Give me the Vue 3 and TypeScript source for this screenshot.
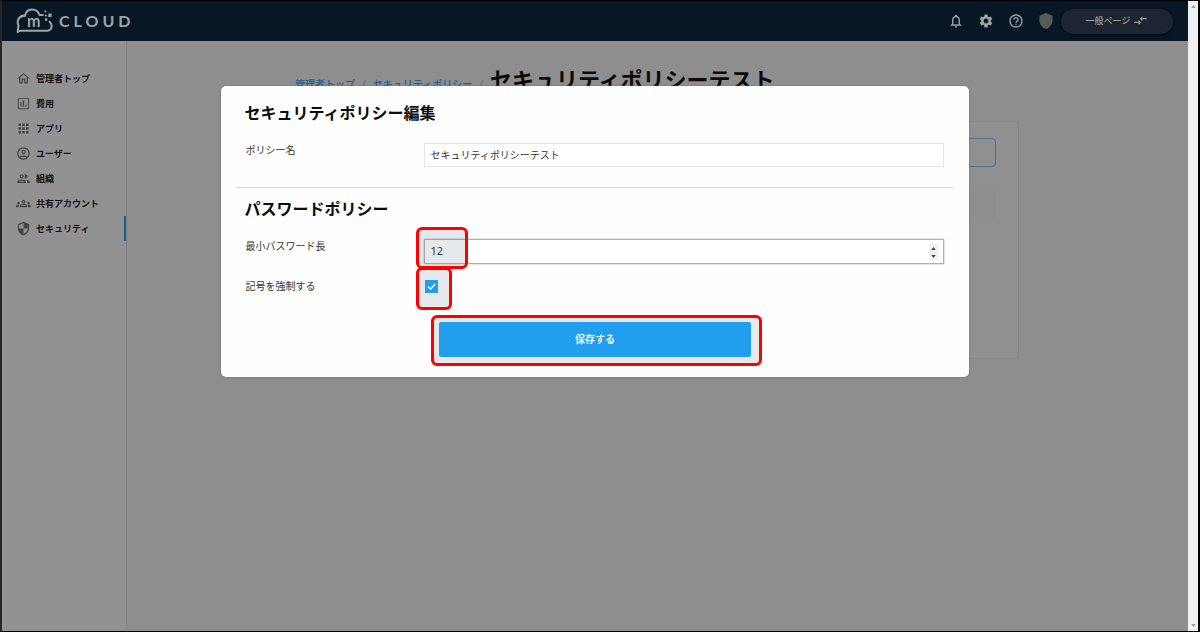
<script setup lang="ts">
import { ref } from 'vue'

interface NavItem {
  label: string
  paths: string[]
  active?: boolean
}

const navItems: NavItem[] = [
  {
    label: '管理者トップ',
    paths: ['M12 5.69l5 4.5V18h-2v-6H9v6H7v-7.81l5-4.5M12 3L2 12h3v8h6v-6h2v6h6v-8h3L12 3z'],
  },
  {
    label: '費用',
    paths: [
      'M19 3H5c-1.1 0-2 .9-2 2v14c0 1.1.9 2 2 2h14c1.1 0 2-.9 2-2V5c0-1.1-.9-2-2-2zm0 16.5H4.5v-15h15v15zM7 10h2v7H7zm4-3h2v10h-2zm4 7h2v3h-2z',
    ],
  },
  {
    label: 'アプリ',
    paths: [
      'M4 8h4V4H4v4zm6 12h4v-4h-4v4zm-6 0h4v-4H4v4zm0-6h4v-4H4v4zm6 0h4v-4h-4v4zm6-10v4h4V4h-4zm-6 4h4V4h-4v4zm6 6h4v-4h-4v4zm0 6h4v-4h-4v4z',
    ],
  },
  {
    label: 'ユーザー',
    paths: [
      'M12 2C6.48 2 2 6.48 2 12s4.48 10 10 10 10-4.48 10-10S17.52 2 12 2zM7.35 18.5C8.66 17.56 10.26 17 12 17s3.34.56 4.65 1.5c-1.31.94-2.91 1.5-4.65 1.5s-3.34-.56-4.65-1.5zm10.79-1.38C16.45 15.8 14.32 15 12 15s-4.45.8-6.14 2.12C4.7 15.73 4 13.95 4 12c0-4.42 3.58-8 8-8s8 3.58 8 8c0 1.95-.7 3.73-1.86 5.12z',
      'M12 6c-1.93 0-3.5 1.57-3.5 3.5S10.07 13 12 13s3.5-1.57 3.5-3.5S13.93 6 12 6zm0 5c-.83 0-1.5-.67-1.5-1.5S11.17 8 12 8s1.5.67 1.5 1.5S12.83 11 12 11z',
    ],
  },
  {
    label: '組織',
    paths: [
      'M9 13.75c-2.34 0-7 1.17-7 3.5V19h14v-1.75c0-2.33-4.66-3.5-7-3.5zM4.34 17c.84-.58 2.87-1.25 4.66-1.25s3.82.67 4.66 1.25H4.34zM9 12c1.93 0 3.5-1.57 3.5-3.5S10.93 5 9 5 5.5 6.57 5.5 8.5 7.07 12 9 12zm0-5c.83 0 1.5.67 1.5 1.5S9.83 10 9 10s-1.5-.67-1.5-1.5S8.17 7 9 7zm7.04 6.81c1.16.84 1.96 1.96 1.96 3.44V19h4v-1.75c0-2.02-3.5-3.17-5.96-3.44zM15 12c1.93 0 3.5-1.57 3.5-3.5S16.93 5 15 5c-.54 0-1.04.13-1.5.35.63.89 1 1.98 1 3.15s-.37 2.26-1 3.15c.46.22.96.35 1.5.35z',
    ],
  },
  {
    label: '共有アカウント',
    paths: [
      'M4 13c1.1 0 2-.9 2-2s-.9-2-2-2-2 .9-2 2 .9 2 2 2zm1.13 1.1c-.37-.06-.74-.1-1.13-.1-.99 0-1.93.21-2.78.58C.48 14.9 0 15.62 0 16.43V18h4.5v-1.61c0-.83.23-1.61.63-2.29zM20 13c1.1 0 2-.9 2-2s-.9-2-2-2-2 .9-2 2 .9 2 2 2zm4 3.43c0-.81-.48-1.53-1.22-1.85-.85-.37-1.79-.58-2.78-.58-.39 0-.76.04-1.13.1.4.68.63 1.46.63 2.29V18H24v-1.57zM16.24 13.65c-1.17-.52-2.61-.9-4.24-.9-1.63 0-3.07.39-4.24.9C6.68 14.13 6 15.21 6 16.39V18h12v-1.61c0-1.18-.68-2.26-1.76-2.74zM8.07 16c.09-.23.13-.39.91-.69.97-.38 1.99-.56 3.02-.56s2.05.18 3.02.56c.77.3.81.46.91.69H8.07zM12 8c.55 0 1 .45 1 1s-.45 1-1 1-1-.45-1-1 .45-1 1-1m0-2c-1.66 0-3 1.34-3 3s1.34 3 3 3 3-1.34 3-3-1.34-3-3-3z',
    ],
  },
  {
    label: 'セキュリティ',
    active: true,
    paths: [
      'M12 1L3 5v6c0 5.55 3.84 10.74 9 12 5.16-1.26 9-6.45 9-12V5l-9-4zm0 10.99h7c-.53 4.12-3.28 7.79-7 8.94V12H5V6.3l7-3.11v8.8z',
    ],
  },
]

const policyName = ref('セキュリティポリシーテスト')
const minLength = ref(12)
const forceSymbols = ref(true)

function step(delta: number) {
  minLength.value = Math.max(1, minLength.value + delta)
}
</script>

<template>
  <div class="window">
    <div class="page">
      <header class="topbar">
        <a class="brand" href="#" aria-label="m CLOUD">
          <svg class="brand-mark" viewBox="0 0 110 76" aria-hidden="true">
            <g fill="none" stroke="currentColor" stroke-width="6" stroke-linecap="round" stroke-linejoin="round">
              <path d="M80 20H70C62-2 31-1 27 22C11 21 1 36 7 50C8 57 5 63 5 71C8 68 10 67 15 67H94C107 65 110 49 100 40" />
              <path d="M27 22C23 22 19 23 16 25" />
            </g>
            <g fill="currentColor">
              <circle cx="87" cy="10" r="3" />
              <rect x="96" y="16" width="10" height="10" rx="1" />
              <circle cx="89" cy="22" r="3" />
              <rect x="86" y="30" width="7" height="7" rx="1" />
            </g>
            <text x="53" y="57" text-anchor="middle" class="brand-m">m</text>
          </svg>
          <span class="brand-name">CLOUD</span>
        </a>
        <div class="tools">
          <button class="tool" type="button" aria-label="通知">
            <svg viewBox="0 0 24 24"><path d="M12 22c1.1 0 2-.9 2-2h-4c0 1.1.9 2 2 2zm6-6v-5c0-3.07-1.63-5.64-4.5-6.32V4c0-.83-.67-1.5-1.5-1.5s-1.5.67-1.5 1.5v.68C7.64 5.36 6 7.92 6 11v5l-2 2v1h16v-1l-2-2zm-2 1H8v-6c0-2.48 1.51-4.5 4-4.5s4 2.02 4 4.5v6z" /></svg>
          </button>
          <button class="tool" type="button" aria-label="設定">
            <svg viewBox="0 0 24 24"><path d="M19.14 12.94c.04-.3.06-.61.06-.94 0-.32-.02-.64-.07-.94l2.03-1.58c.18-.14.23-.41.12-.61l-1.92-3.32c-.12-.22-.37-.29-.59-.22l-2.39.96c-.5-.38-1.03-.7-1.62-.94l-.36-2.54c-.04-.24-.24-.41-.48-.41h-3.84c-.24 0-.43.17-.47.41l-.36 2.54c-.59.24-1.13.57-1.62.94l-2.39-.96c-.22-.08-.47 0-.59.22L2.74 8.87c-.12.21-.08.47.12.61l2.03 1.58c-.05.3-.09.63-.09.94s.02.64.07.94l-2.03 1.58c-.18.14-.23.41-.12.61l1.92 3.32c.12.22.37.29.59.22l2.39-.96c.5.38 1.03.7 1.62.94l.36 2.54c.05.24.24.41.48.41h3.84c.24 0 .44-.17.47-.41l.36-2.54c.59-.24 1.13-.56 1.62-.94l2.39.96c.22.08.47 0 .59-.22l1.92-3.32c.12-.22.07-.47-.12-.61l-2.01-1.58zM12 15.6c-1.98 0-3.6-1.62-3.6-3.6s1.62-3.6 3.6-3.6 3.6 1.62 3.6 3.6-1.62 3.6-3.6 3.6z" /></svg>
          </button>
          <button class="tool" type="button" aria-label="ヘルプ">
            <svg viewBox="0 0 24 24"><path d="M11 18h2v-2h-2v2zm1-16C6.48 2 2 6.48 2 12s4.48 10 10 10 10-4.48 10-10S17.52 2 12 2zm0 18c-4.41 0-8-3.59-8-8s3.59-8 8-8 8 3.59 8 8-3.59 8-8 8zm0-14c-2.21 0-4 1.79-4 4h2c0-1.1.9-2 2-2s2 .9 2 2c0 2-3 1.75-3 5h2c0-2.25 3-2.5 3-5 0-2.21-1.79-4-4-4z" /></svg>
          </button>
          <button class="tool shield" type="button" aria-label="管理者">
            <svg viewBox="2 0 20 24"><path d="M12 0L2.200 4.200v6.800c0 5.800 4 11.300 9.800 13 5.800-1.700 9.800-7.200 9.800-13V4.200z" /></svg>
          </button>
          <button class="switch" type="button">
            一般ページ
            <svg viewBox="0 0 24 24" aria-hidden="true"><path d="M9.010 14H2v2h7.010v3L13 15l-3.990-4v3zm5.980-1v-3H22V8h-7.010V5L11 9l3.990 4z" /></svg>
          </button>
        </div>
      </header>

      <div class="body">
        <nav class="sidebar">
          <a v-for="item in navItems" :key="item.label" class="nav-item" :class="{ active: item.active }" href="#">
            <svg viewBox="0 0 24 24" aria-hidden="true">
              <path v-for="d in item.paths" :key="d" :d="d" />
            </svg>
            <span>{{ item.label }}</span>
          </a>
        </nav>
        <main class="content">
          <div class="crumbs">
            <a href="#">管理者トップ</a>
            <span class="slash">/</span>
            <a href="#">セキュリティポリシー</a>
            <span class="slash">/</span>
            <h1>セキュリティポリシーテスト</h1>
          </div>
          <section class="card">
            <div class="card-action"></div>
            <div class="card-panel"></div>
          </section>
        </main>
      </div>

      <form class="dialog" role="dialog" aria-labelledby="dialog-title" @submit.prevent>
        <h2 id="dialog-title">セキュリティポリシー編集</h2>
        <div class="row">
          <label for="policy-name">ポリシー名</label>
          <input id="policy-name" v-model="policyName" class="field" type="text" />
        </div>
        <hr />
        <h2>パスワードポリシー</h2>
        <div class="row">
          <label for="min-length">最小パスワード長</label>
          <div class="cell">
            <input id="min-length" v-model.number="minLength" class="field number" type="number" min="1" />
            <span class="spinner">
              <button type="button" tabindex="-1" aria-label="増やす" @click="step(1)">
                <svg viewBox="0 0 6 4"><path d="M0 4l3-4 3 4z" /></svg>
              </button>
              <button type="button" tabindex="-1" aria-label="減らす" @click="step(-1)">
                <svg viewBox="0 0 6 4"><path d="M0 0l3 4 3-4z" /></svg>
              </button>
            </span>
            <span class="mark mark-number"></span>
          </div>
        </div>
        <div class="row last">
          <label for="symbols">記号を強制する</label>
          <div class="cell check-cell">
            <span class="mark mark-check"></span>
            <span class="check">
              <input id="symbols" v-model="forceSymbols" type="checkbox" />
              <svg v-if="forceSymbols" viewBox="0 0 13 13" aria-hidden="true"><path d="M3 6.500l2.500 2.500L10.300 4" /></svg>
            </span>
          </div>
        </div>
        <div class="submit">
          <span class="mark mark-submit"></span>
          <button type="submit">保存する</button>
        </div>
      </form>
    </div>
    <div class="scrollbar" aria-hidden="true">
      <svg viewBox="0 0 6 4"><path d="M0 4l3-4 3 4z" /></svg>
      <svg viewBox="0 0 6 4"><path d="M0 0l3 4 3-4z" /></svg>
    </div>
  </div>
</template>

<style>
body {
  margin: 0;
}
</style>

<style scoped>
.window,
.window * {
  box-sizing: border-box;
}

.window {
  display: flex;
  min-height: 100vh;
  border: 1px solid #000;
  border-left: 2px solid #262626;
  border-right-width: 2px;
  font-family: 'Noto Sans', 'Noto Sans CJK JP', sans-serif;
  font-size: 10px;
  color: #333;
}

button,
input {
  font: inherit;
  margin: 0;
}

.page {
  position: relative;
  display: flex;
  flex: 1;
  flex-direction: column;
  min-width: 0;
  background: #8e8e8e;
}

.topbar {
  display: flex;
  align-items: center;
  justify-content: space-between;
  height: 40px;
  padding: 0 15px 0 14px;
  background: #071824;
  color: #a0a3a5;
}

.brand {
  display: flex;
  align-items: center;
  gap: 6px;
  color: inherit;
  text-decoration: none;
}

.brand-mark {
  width: 37px;
  height: 26px;
}

.brand-m {
  font-family: Lato, sans-serif;
  font-size: 48px;
  font-weight: 700;
  fill: currentColor;
}

.brand-name {
  font-family: Lato, sans-serif;
  font-size: 16px;
  font-weight: 700;
  line-height: 20px;
  letter-spacing: 4px;
}

.tools {
  display: flex;
  align-items: center;
}

.tool {
  display: flex;
  align-items: center;
  justify-content: center;
  width: 30px;
  height: 30px;
  padding: 0;
  border: 0;
  background: none;
  color: inherit;
}

.tool svg {
  width: 16px;
  height: 16px;
  fill: currentColor;
}

.shield {
  color: #5a5a5a;
}

.switch {
  display: flex;
  align-items: center;
  justify-content: center;
  gap: 3px;
  width: 112px;
  height: 25px;
  padding: 0 0 2px;
  border: 0;
  border-radius: 13px;
  background: #1c2531;
  box-shadow: 0 1px 3px #030c14;
  color: #9b9b9b;
  font-size: 9px;
  font-weight: 500;
}

.switch svg {
  width: 15px;
  height: 15px;
  fill: currentColor;
}

.body {
  display: flex;
  flex: 1;
}

.sidebar {
  width: 125px;
  padding-top: 25px;
  border-right: 1px solid #828282;
  background: #929292;
}

.nav-item {
  display: flex;
  align-items: center;
  gap: 5px;
  height: 25px;
  padding-left: 14px;
  border-right: 2px solid transparent;
  color: #111;
  font-size: 9px;
  font-weight: 700;
  text-decoration: none;
}

.nav-item.active {
  border-right-color: #215f8e;
}

.nav-item svg {
  width: 15px;
  height: 15px;
  fill: #444;
}

.content {
  flex: 1;
  padding: 22px 169px 0 168px;
}

.crumbs {
  display: flex;
  align-items: baseline;
  gap: 7px;
  height: 58px;
  white-space: nowrap;
}

.crumbs a {
  color: #1b5d90;
  font-weight: 500;
  text-decoration: none;
}

.slash {
  color: #666;
}

.crumbs h1 {
  margin: 0;
  color: #0b0b0b;
  font-size: 22px;
  font-weight: 700;
  line-height: 32px;
}

.card {
  display: flex;
  flex-direction: column;
  gap: 23px;
  height: 238px;
  padding: 16px 22px;
  border: 1px solid #868686;
  border-radius: 4px;
  background: #909090;
}

.card-action {
  align-self: flex-end;
  width: 90px;
  height: 29px;
  border: 1px solid #4f7189;
  border-radius: 4px;
}

.card-panel {
  height: 32px;
  background: #8e8e8e;
}

.dialog {
  position: absolute;
  top: 85px;
  left: 0;
  right: 0;
  width: 63%;
  margin: 0 auto;
  padding: 15px 15px 20px;
  border-radius: 5px;
  background: #fefefe;
  box-shadow: 0 0 2px #666;
}

.dialog h2 {
  margin: 0 8px 18px;
  color: #0c0c0c;
  font-size: 16px;
  font-weight: 700;
  line-height: 24px;
}

.dialog hr {
  height: 1px;
  margin: 20px 0 9px;
  border: 0;
  background: #d9d9d9;
}

.row {
  display: grid;
  grid-template-columns: 179px 1fr;
  align-items: start;
  margin: 0 10px 0 9px;
}

.row label {
  line-height: 14px;
}

.cell {
  position: relative;
}

.field {
  display: block;
  width: 100%;
  height: 24px;
  padding: 0 5px 2px;
  border: 1px solid #e4e4e4;
  border-radius: 0;
  outline: 0;
  background: #fff;
  color: #333;
}

.field.number {
  height: 25px;
  border-color: #b0b0b0;
  box-shadow: 0 0 2px #bbb;
  font-size: 11px;
  appearance: textfield;
}

.number::-webkit-inner-spin-button {
  appearance: none;
}

.spinner {
  position: absolute;
  top: 5px;
  right: 6px;
  display: flex;
  flex-direction: column;
  width: 9px;
  height: 16px;
  background: #f1f1f1;
}

.spinner button {
  display: flex;
  flex: 1;
  align-items: center;
  justify-content: center;
  padding: 0;
  border: 0;
  background: none;
}

.spinner svg {
  width: 5px;
  height: 3px;
  fill: #444;
}

.row.last {
  margin-top: 15px;
}

.check-cell {
  height: 25px;
  padding: 1px 0 0 1px;
}

.check {
  position: relative;
  display: block;
  width: 13px;
  height: 13px;
}

.check input {
  display: block;
  width: 13px;
  height: 13px;
  border: 1px solid #999;
  appearance: none;
}

.check input:checked {
  border: 0;
  background: #229eee;
}

.check svg {
  position: absolute;
  inset: 0;
  fill: none;
  stroke: #fff;
  stroke-width: 1.5;
  pointer-events: none;
}

.mark {
  position: absolute;
  border: 3px solid #f00;
  border-radius: 6px;
  background: rgba(50, 80, 110, 0.12);
  pointer-events: none;
}

.mark-number {
  top: -12px;
  left: -8px;
  width: 52px;
  height: 42px;
}

.mark-check {
  top: -12px;
  left: -8px;
  width: 36px;
  height: 43px;
}

.submit {
  position: relative;
  width: 312px;
  margin: 18px auto 0;
}

.mark-submit {
  inset: -7px -11px -9px -8px;
}

.submit button {
  position: relative;
  display: block;
  width: 100%;
  height: 35px;
  padding: 0 0 2px;
  border: 0;
  border-radius: 2px;
  background: #229eee;
  color: #e9f5fe;
  font-weight: 700;
}

.scrollbar {
  display: flex;
  flex-direction: column;
  align-items: center;
  justify-content: space-between;
  width: 10px;
  padding: 4px 0;
  background: #f1f1f1;
}

.scrollbar svg {
  width: 5px;
  height: 3px;
  fill: #999;
}
</style>
